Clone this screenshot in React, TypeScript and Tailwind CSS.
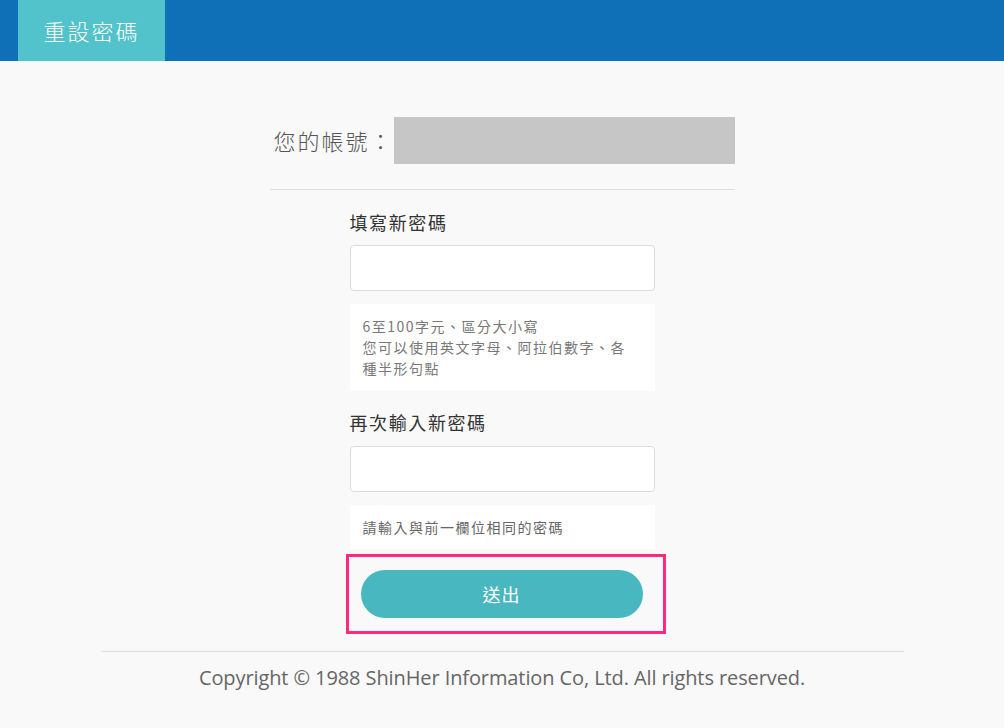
export default function App() {
  const cjk = { fontFamily: '"Noto Sans CJK TC", "Noto Sans", sans-serif' }

  return (
    <div className="min-h-screen w-full bg-[#f9f9f9]" style={cjk}>
      {/* Header */}
      <header className="h-[61px] bg-[#0f70b8] pl-[18px] flex">
        <div className="w-[147px] h-full bg-[#52c3cb] flex items-center justify-center text-white text-[22px] tracking-[2px] font-light">
          重設密碼
        </div>
      </header>

      <main className="flex flex-col items-center">
        {/* Account row */}
        <div className="w-[465px] mt-[56px] flex items-center pl-[4px]">
          <span className="text-[22px] text-[#555] leading-[47px] tracking-[2px] w-[121px] font-light">您的帳號：</span>
          <div className="w-[342px] h-[47px] bg-[#c6c6c6]" />
        </div>
        <div className="w-[465px] h-px bg-[#dedede] mt-[25px]" />

        {/* Form */}
        <div className="w-[305px] flex flex-col">
          <label className="mt-[20px] text-[18px] leading-[24px] text-[#333] tracking-[1.6px]">填寫新密碼</label>
          <input
            type="password"
            className="mt-[11px] h-[46px] bg-white border border-[#dcdcdc] rounded-[4px] px-3 outline-none"
          />
          <div className="mt-[13px] bg-white pl-[13px] pr-[20px] py-[12px] text-[14px] leading-[21px] text-[#777] tracking-[1.5px]">
            <p>6至100字元、區分大小寫</p>
            <p>您可以使用英文字母、阿拉伯數字、各種半形句點</p>
          </div>

          <label className="mt-[19px] text-[18px] leading-[24px] text-[#333] tracking-[1.6px]">再次輸入新密碼</label>
          <input
            type="password"
            className="mt-[12px] h-[46px] bg-white border border-[#dcdcdc] rounded-[4px] px-3 outline-none"
          />
          <div className="mt-[13px] bg-white px-[13px] py-[12px] text-[14px] leading-[20px] text-[#666] tracking-[1.5px]">
            <p>請輸入與前一欄位相同的密碼</p>
          </div>
        </div>

        {/* Submit with highlight frame */}
        <div className="mt-[5px] ml-[7px] w-[320px] h-[80px] border-[3px] border-[#ff2a7e] pl-[12px] pt-[13px]">
          <button className="w-[282px] h-[48px] rounded-full bg-[#48b7bf] text-white text-[18px] tracking-[1px]">
            送出
          </button>
        </div>

        {/* Footer */}
        <div className="w-[803px] h-px bg-[#dedede] mt-[17px]" />
        <p
          className="mt-[13px] text-[20px] text-[#666] leading-[26px] tracking-[-0.1px]"
          style={{ fontFamily: '"Open Sans", "Noto Sans", sans-serif' }}
        >
          Copyright © 1988 ShinHer Information Co, Ltd. All rights reserved.
        </p>
      </main>
    </div>
  )
}
